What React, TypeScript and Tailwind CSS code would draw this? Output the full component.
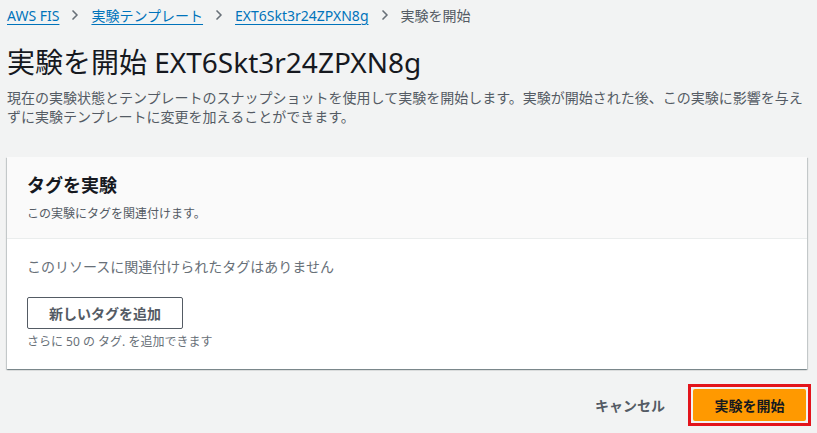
import { ChevronRight } from 'lucide-react';

const font = { fontFamily: '"Noto Sans", "Noto Sans CJK JP", sans-serif' };

function Crumb({ label }: { label: string }) {
    return (
        <a className="text-[#0073bb] underline underline-offset-[3px] decoration-1 cursor-pointer">{label}</a>
    );
}

function Sep() {
    return <ChevronRight className="w-4 h-4 text-[#687078] mx-[8px]" strokeWidth={2.5} />;
}

export default function App() {
    return (
        <div className="min-h-[433px] w-[817px] bg-[#f2f3f3] text-[#16191f] pl-[7px] pr-[10px]" style={font}>
            {/* Breadcrumbs */}
            <nav className="flex items-center h-[30px] text-[14px]">
                <Crumb label="AWS FIS" />
                <Sep />
                <Crumb label="実験テンプレート" />
                <Sep />
                <Crumb label="EXT6Skt3r24ZPXN8g" />
                <Sep />
                <span className="text-[#545b64]">実験を開始</span>
            </nav>

            {/* Header */}
            <h1 className="text-[28px] leading-[36px] mt-[14px] font-normal">実験を開始 EXT6Skt3r24ZPXN8g</h1>
            <p className="text-[14px] leading-[19px] text-[#545b64] mt-[8px] pr-[4px]">
                現在の実験状態とテンプレートのスナップショットを使用して実験を開始します。実験が開始された後、この実験に影響を与えずに実験テンプレートに変更を加えることができます。
            </p>

            {/* Tags card */}
            <div className="mt-[31px] bg-white shadow-[0_1px_1px_0_rgba(0,28,36,0.3),1px_1px_1px_0_rgba(0,28,36,0.15),-1px_1px_1px_0_rgba(0,28,36,0.15)]">
                <div className="bg-[#fafafa] border-b border-[#eaeded] px-[20px] pt-[16px] pb-[16px]">
                    <h2 className="text-[18px] leading-[24px] font-bold">タグを実験</h2>
                    <p className="text-[12px] leading-[16px] text-[#545b64] mt-[9px]">この実験にタグを関連付けます。</p>
                </div>
                <div className="px-[20px] pt-[18px] pb-[19px]">
                    <p className="text-[14px] leading-[20px] text-[#687078]">このリソースに関連付けられたタグはありません</p>
                    <button className="mt-[20px] h-[32px] w-[156px] border border-[#545b64] rounded-[2px] bg-white text-[14px] font-bold text-[#545b64]">
                        新しいタグを追加
                    </button>
                    <p className="text-[12px] leading-[16px] text-[#687078] mt-[5px]">さらに 50 の タグ. を追加できます</p>
                </div>
            </div>

            {/* Footer actions */}
            <div className="flex justify-end items-center mt-[15px] gap-[13px]">
                <button className="text-[14px] font-bold text-[#545b64] px-[10px] h-[32px]">キャンセル</button>
                <div className="border-[3px] border-[#e3141b] p-[2px] mr-[-4px]">
                    <button className="h-[32px] w-[113px] bg-[#ff9900] rounded-[2px] text-[14px] font-bold text-[#16191f]">
                        実験を開始
                    </button>
                </div>
            </div>
        </div>
    );
}
